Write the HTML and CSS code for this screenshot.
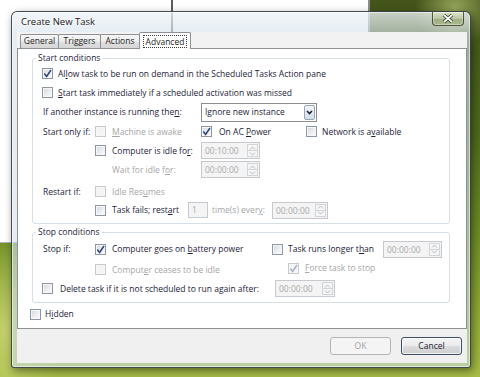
FILE: index.html
```html
<!DOCTYPE html>
<html>
<head>
<meta charset="utf-8">
<link rel="stylesheet" href="styles.css">
</head>
<body>
<div class="desk">
  <div class="bgwin"><div class="splitter"></div></div>
  <div class="window">
    <div class="titlebar">
      <span class="title">Create New Task</span>
      <div class="close"><svg viewBox="0 0 12 9" width="12" height="9"><path d="M2 1L10 8M10 1L2 8" stroke="#2b3320" stroke-width="3.4" fill="none"/><path d="M2 1L10 8M10 1L2 8" stroke="#ffffff" stroke-width="1.7" fill="none"/></svg></div>
    </div>
    <div class="client">
      <div class="tabs">
        <div class="tab t-gen">General</div>
        <div class="tab t-trg">Triggers</div>
        <div class="tab t-act">Actions</div>
        <div class="tab sel"><span class="focus">Advanced</span></div>
      </div>
      <div class="page">
        <fieldset class="group start">
          <legend>Start conditions</legend>
          <div class="rows">
            <div class="row h19">
              <div class="chk g5"><span class="cb"><svg class="ck" viewBox="0 0 9 9" width="9" height="9"><path d="M1.3 4.6L3.6 7.4L8 1" fill="none" stroke="#2f437a" stroke-width="1.5"/></svg></span><span>Al<u>l</u>ow task to be run on demand in the Scheduled Tasks Action pane</span></div>
            </div>
            <div class="row h19">
              <div class="chk g5"><span class="cb"></span><span><u>S</u>tart task immediately if a scheduled activation was missed</span></div>
            </div>
            <div class="row h20">
              <span class="lbl w159">If another instance is running the<u>n</u>:</span>
              <div class="combo"><span class="ctext">Ignore new instance</span><span class="cbtn"><svg viewBox="0 0 7 5" width="7" height="5"><path d="M1 1L3.5 3.6L6 1" stroke="#1e2230" stroke-width="1.5" fill="none"/></svg></span></div>
            </div>
            <div class="row h19">
              <span class="lbl">Start only if:</span>
              <div class="chk dis w106"><span class="cb"></span><span><u>M</u>achine is awake</span></div>
              <div class="chk w105 g7"><span class="cb"><svg class="ck" viewBox="0 0 9 9" width="9" height="9"><path d="M1.3 4.6L3.6 7.4L8 1" fill="none" stroke="#2f437a" stroke-width="1.5"/></svg></span><span>On AC <u>P</u>ower</span></div>
              <div class="chk g5"><span class="cb"></span><span>Network is a<u>v</u>ailable</span></div>
            </div>
            <div class="row h19">
              <span class="lbl"></span>
              <div class="chk w106"><span class="cb"></span><span>Computer is idle fo<u>r</u>:</span></div>
              <div class="spin w59"><span class="v">00:10:00</span><span class="sb"><span><svg viewBox="0 0 7 4" width="7" height="4"><path d="M1 3.5L3.5 1L6 3.5" fill="none" stroke="#b4b8bc"/></svg></span><span><svg viewBox="0 0 7 4" width="7" height="4"><path d="M1 0.5L3.5 3L6 0.5" fill="none" stroke="#b4b8bc"/></svg></span></span></div>
            </div>
            <div class="row h19">
              <span class="lbl"></span>
              <span class="dtext w106 ind">Wait for idle f<u>o</u>r:</span>
              <div class="spin w59"><span class="v">00:00:00</span><span class="sb"><span><svg viewBox="0 0 7 4" width="7" height="4"><path d="M1 3.5L3.5 1L6 3.5" fill="none" stroke="#b4b8bc"/></svg></span><span><svg viewBox="0 0 7 4" width="7" height="4"><path d="M1 0.5L3.5 3L6 0.5" fill="none" stroke="#b4b8bc"/></svg></span></span></div>
            </div>
            <div class="row h19 mt3">
              <span class="lbl">Restart if:</span>
              <div class="chk dis"><span class="cb"></span><span>Idle Res<u>u</u>mes</span></div>
            </div>
            <div class="row h18">
              <span class="lbl"></span>
              <div class="chk w93"><span class="cb"></span><span>Task fails; rest<u>a</u>rt</span></div>
              <div class="num">1</div>
              <span class="dtext every">time(s) ever<u>y</u>:</span>
              <div class="spin w56"><span class="v">00:00:00</span><span class="sb"><span><svg viewBox="0 0 7 4" width="7" height="4"><path d="M1 3.5L3.5 1L6 3.5" fill="none" stroke="#b4b8bc"/></svg></span><span><svg viewBox="0 0 7 4" width="7" height="4"><path d="M1 0.5L3.5 3L6 0.5" fill="none" stroke="#b4b8bc"/></svg></span></span></div>
            </div>
          </div>
        </fieldset>
        <fieldset class="group stop">
          <legend>Stop conditions</legend>
          <div class="rows">
            <div class="row h22">
              <span class="lbl">Stop if:</span>
              <div class="chk w177"><span class="cb"><svg class="ck" viewBox="0 0 9 9" width="9" height="9"><path d="M1.3 4.6L3.6 7.4L8 1" fill="none" stroke="#2f437a" stroke-width="1.5"/></svg></span><span>Computer goes on <u>b</u>attery power</span></div>
              <div class="chk w111 g5"><span class="cb"></span><span>Task runs longer t<u>h</u>an</span></div>
              <div class="spin w59"><span class="v">00:00:00</span><span class="sb"><span><svg viewBox="0 0 7 4" width="7" height="4"><path d="M1 3.5L3.5 1L6 3.5" fill="none" stroke="#b4b8bc"/></svg></span><span><svg viewBox="0 0 7 4" width="7" height="4"><path d="M1 0.5L3.5 3L6 0.5" fill="none" stroke="#b4b8bc"/></svg></span></span></div>
            </div>
            <div class="row h19">
              <span class="lbl"></span>
              <div class="chk dis w193"><span class="cb"></span><span>Comput<u>e</u>r ceases to be idle</span></div>
              <div class="chk dis up2"><span class="cb"><svg class="ck" viewBox="0 0 9 9" width="9" height="9"><path d="M1.3 4.6L3.6 7.4L8 1" fill="none" stroke="#a9b3c6" stroke-width="1.5"/></svg></span><span><u>F</u>orce task to stop</span></div>
            </div>
            <div class="row h19">
              <div class="chk w233 g7"><span class="cb"></span><span>Delete task if it is not scheduled to run a<u>g</u>ain after:</span></div>
              <div class="spin w60"><span class="v">00:00:00</span><span class="sb"><span><svg viewBox="0 0 7 4" width="7" height="4"><path d="M1 3.5L3.5 1L6 3.5" fill="none" stroke="#b4b8bc"/></svg></span><span><svg viewBox="0 0 7 4" width="7" height="4"><path d="M1 0.5L3.5 3L6 0.5" fill="none" stroke="#b4b8bc"/></svg></span></span></div>
            </div>
          </div>
        </fieldset>
        <div class="hidden-row">
          <div class="chk g4"><span class="cb"></span><span>H<u>i</u>dden</span></div>
        </div>
      </div>
      <div class="footer">
        <div class="btn ok">OK</div>
        <div class="btn cancel">Cancel</div>
      </div>
    </div>
  </div>
</div>
</body>
</html>
```

FILE: styles.css
```css
* { box-sizing: border-box; }
html, body { margin: 0; padding: 0; }
body {
  width: 480px;
  height: 377px;
  overflow: hidden;
  font-family: "Open Sans", "Noto Sans", sans-serif;
  font-size: 8.5px;
  line-height: 12px;
  color: #232338;
}
u { text-decoration: underline; text-underline-offset: 1px; }

.desk {
  position: relative;
  width: 480px;
  height: 377px;
  overflow: hidden;
  background:
    radial-gradient(ellipse 40px 40px at 455px 8px, rgba(175,190,110,0.75), rgba(175,190,110,0) 100%),
    radial-gradient(ellipse 60px 90px at 5px 330px, rgba(205,215,120,0.8), rgba(205,215,120,0) 100%),
    linear-gradient(180deg, #44541a 0%, #4f6a1c 35%, #6f8e26 62%, #94ad36 85%, #a7bd46 100%);
}
.bgwin {
  position: absolute;
  left: 0;
  top: 0;
  width: 370px;
  height: 243px;
  background: #ffffff;
  border-right: 2px solid #8c8c8c;
  border-bottom: 1px solid #b5b5b5;
}
.splitter {
  position: absolute;
  left: 171px;
  top: 0;
  width: 2px;
  height: 100%;
  background: #5e5e5e;
}

.window {
  position: absolute;
  left: 11px;
  top: 11px;
  width: 460px;
  height: 357px;
  border: 1px solid rgba(28, 36, 44, 0.8);
  border-radius: 6px 6px 3px 3px;
  background: linear-gradient(180deg, rgba(238,243,247,0.78) 0px, rgba(214,226,236,0.62) 22px, rgba(206,222,232,0.58) 100%);
  box-shadow: 2px 3px 9px rgba(0,0,0,0.45), inset 0 0 0 1px rgba(255,255,255,0.55);
  display: flex;
  flex-direction: column;
  padding: 0 3px 4px 5px;
}
.titlebar {
  position: relative;
  height: 20px;
  display: flex;
  align-items: center;
  padding-left: 4px;
}
.title {
  font-size: 9.5px;
  color: #1a1a1a;
  text-shadow: 0 0 5px rgba(255,255,255,0.9), 0 0 2px rgba(255,255,255,0.9);
}
.close {
  position: absolute;
  right: 3px;
  top: 0;
  width: 32px;
  height: 14px;
  border: 1px solid rgba(35,45,25,0.75);
  border-top: none;
  border-radius: 0 0 4px 4px;
  background: linear-gradient(180deg, rgba(225,232,200,0.55) 0%, rgba(170,185,120,0.45) 50%, rgba(110,130,60,0.45) 51%, rgba(150,170,90,0.5) 100%);
  box-shadow: inset 0 0 0 1px rgba(255,255,255,0.35);
  display: flex;
  align-items: center;
  justify-content: center;
}
.close svg { display: block; }

.client {
  flex: 1;
  background: #f0f0f0;
  display: flex;
  flex-direction: column;
}
.tabs {
  height: 16px;
  display: flex;
  align-items: flex-end;
  padding-left: 3px;
  background: #f2f2f2;
}
.tab {
  height: 14px;
  border: 1px solid #8d9096;
  border-bottom: none;
  border-radius: 2px 2px 0 0;
  background: linear-gradient(180deg, #f6f6f6 0%, #ececec 50%, #e0e0e0 51%, #d6d6d6 100%);
  text-align: center;
  line-height: 12px;
  color: #1e1e1e;
  margin-left: -1px;
}
.t-gen { width: 39px; margin-left: 0; }
.t-trg { width: 43px; }
.t-act { width: 40px; }
.tab.sel {
  position: relative;
  z-index: 1;
  width: 52px;
  height: 17px;
  margin-bottom: -1px;
  background: #ffffff;
  padding-top: 2px;
}
.focus {
  display: inline-block;
  height: 13px;
  line-height: 11px;
  padding: 0 2px;
  border: 1px dotted #3a3a3a;
}

.page {
  height: 281px;
  background: #ffffff;
  border: 1px solid #8e9196;
  padding: 3px 0 0 14px;
}
.group {
  margin: 0;
  padding: 0;
  width: 418px;
  min-width: 0;
  border: 1px solid #d5dfe5;
  border-radius: 3px;
}
.group.stop { margin-top: 2px; }
.group legend {
  margin-left: 3px;
  padding: 0 2px;
  height: 12px;
  line-height: 12px;
  color: #232338;
}
.rows { padding: 0 0 4px 9px; }
.row {
  display: flex;
  align-items: center;
}
.h18 { height: 18px; }
.h19 { height: 19px; }
.h20 { height: 20px; }
.h22 { height: 22px; }
.mt3 { margin-top: 3px; }

.lbl {
  width: 53px;
  flex: none;
  padding-left: 1px;
  white-space: nowrap;
}
.w159 { width: 159px; }

.chk {
  display: flex;
  align-items: center;
  gap: 6px;
  flex: none;
  white-space: nowrap;
}
.g4 { gap: 4px; }
.g5 { gap: 5px; }
.g7 { gap: 7px; }
.w93 { width: 93px; }
.w105 { width: 105px; }
.w106 { width: 106px; }
.w111 { width: 111px; }
.w177 { width: 177px; }
.w193 { width: 193px; }
.w233 { width: 233px; }
.up2 { margin-top: -3px; }

.cb {
  width: 11px;
  height: 11px;
  flex: none;
  border: 1px solid #8e97a4;
  background: linear-gradient(135deg, #d2d5da 0%, #eceef0 55%, #fbfbfb 100%);
  box-shadow: inset 0 0 0 1px #f7f7f7;
  display: flex;
  align-items: center;
  justify-content: center;
}
.ck { display: block; }
.chk.dis { color: #a6a6a6; }
.chk.dis .cb {
  border-color: #c6cacf;
  background: #f4f4f4;
}
.dtext { color: #a6a6a6; flex: none; white-space: nowrap; }
.ind { padding-left: 17px; }
.every { width: 60px; margin-left: 4px; }

.combo {
  width: 116px;
  height: 19px;
  flex: none;
  border: 1px solid #8b8d90;
  background: #ffffff;
  display: flex;
  align-items: center;
  padding-right: 1px;
}
.ctext { flex: 1; padding-left: 3px; color: #232338; }
.cbtn {
  width: 11px;
  height: 15px;
  border: 1px solid #97a6b9;
  border-radius: 2px;
  background: linear-gradient(180deg, #f1f5f9 0%, #e2eaf2 50%, #d2dee9 100%);
  display: flex;
  align-items: center;
  justify-content: center;
}
.cbtn svg { display: block; }

.spin {
  height: 17px;
  flex: none;
  display: flex;
  border: 1px solid #c6c9cd;
  background: #f4f4f4;
  color: #aaaaaa;
}
.w56 { width: 56px; }
.w59 { width: 59px; }
.w60 { width: 60px; }
.spin .v { flex: 1; padding-left: 3px; line-height: 15px; }
.spin .sb {
  width: 12px;
  display: flex;
  flex-direction: column;
  padding: 1px 1px 1px 0;
}
.spin .sb span {
  flex: 1;
  display: flex;
  align-items: center;
  justify-content: center;
  border: 1px solid #d3d6d9;
  background: #f6f6f6;
}
.spin .sb span + span { border-top: none; }
.spin svg { display: block; }

.num {
  width: 20px;
  height: 16px;
  flex: none;
  border: 1px solid #c6c9cd;
  background: #f4f4f4;
  color: #aaaaaa;
  padding-left: 3px;
  line-height: 14px;
}

.hidden-row {
  margin: 5px 0 0 -2px;
  height: 12px;
  display: flex;
  align-items: center;
}

.footer {
  flex: 1;
  display: flex;
  justify-content: flex-end;
  align-items: flex-start;
  gap: 10px;
  padding: 8px 5px 0 0;
}
.btn {
  width: 61px;
  height: 18px;
  border-radius: 3px;
  display: flex;
  align-items: center;
  justify-content: center;
  font-size: 8.5px;
}
.btn.ok {
  border: 1px solid #b1b5b9;
  background: #f4f4f4;
  color: #a3a3a3;
}
.btn.cancel {
  border: 1px solid #3e4d5f;
  background: linear-gradient(180deg, #f4f4f4 0%, #ebebeb 50%, #dcdcdc 51%, #cfcfcf 100%);
  box-shadow: inset 0 0 0 1px rgba(255,255,255,0.75);
  color: #232338;
}
```
